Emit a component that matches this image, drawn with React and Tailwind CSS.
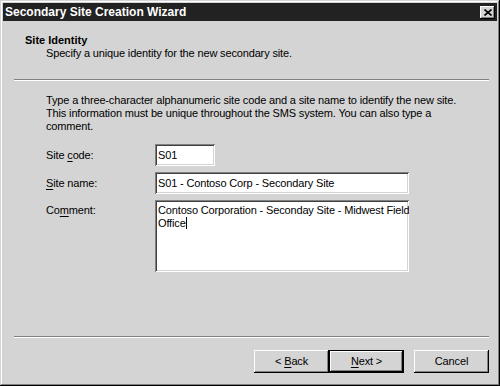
import React from "react";

const raised =
  "shadow-[inset_-1px_-1px_0_#000,inset_1px_1px_0_#fff,inset_-2px_-2px_0_#808080,inset_2px_2px_0_#d4d4d4]";
const sunken =
  "shadow-[inset_1px_1px_0_#808080,inset_-1px_-1px_0_#fff,inset_2px_2px_0_#404040,inset_-2px_-2px_0_#d4d4d4]";

function Sep() {
  return <div className="ml-[11px] mr-[8px] h-[2px] border-t border-t-[#808080] border-b border-b-white" />;
}

function Label({ pre, u, post, top }) {
  return (
    <div className={`w-[109px] shrink-0 ${top ? "pt-[4px] self-start" : ""}`}>
      {pre}
      <span className="underline underline-offset-2">{u}</span>
      {post}
    </div>
  );
}

export default function App() {
  return (
    <div
      className="w-[500px] h-[386px] bg-[#d4d4d4] p-[3px] flex flex-col text-[11px] leading-[13px] text-black tracking-[-0.15px] shadow-[inset_-1px_-1px_0_#000,inset_1px_1px_0_#d4d4d4,inset_-2px_-2px_0_#808080,inset_2px_2px_0_#fff]"
      style={{ fontFamily: '"Liberation Sans", Arial, sans-serif' }}
    >
      {/* title bar */}
      <div className="h-[18px] bg-[#222] flex items-center justify-between pl-[2px] pr-[2px] shrink-0">
        <span className="text-white font-bold text-[12px] tracking-[0px]">Secondary Site Creation Wizard</span>
        <div className={`w-[15px] h-[13px] bg-[#d4d4d4] flex items-center justify-center ${raised}`}>
          <svg width="8" height="7" viewBox="0 0 8 7">
            <path d="M0.5 0.5 L7.5 6.5 M7.5 0.5 L0.5 6.5" stroke="#000" strokeWidth="1.6" />
          </svg>
        </div>
      </div>

      {/* header */}
      <div className="h-[58px] shrink-0 pt-[13px] pl-[22px]">
        <div className="font-bold tracking-[0px]">Site Identity</div>
        <div className="pl-[21px]">Specify a unique identity for the new secondary site.</div>
      </div>
      <Sep />

      {/* body */}
      <div className="pl-[43px] mt-[13px]">
        <p className="whitespace-nowrap">
          Type a three-character alphanumeric site code and a site name to identify the new site.
          <br />
          This information must be unique throughout the SMS system. You can also type a
          <br />
          comment.
        </p>
        <div className="flex items-center mt-[11px]">
          <Label pre="Site " u="c" post="ode:" />
          <div className={`w-[60px] h-[22px] bg-white pl-[3px] flex items-center ${sunken}`}>S01</div>
        </div>
        <div className="flex items-center mt-[6px]">
          <Label pre="" u="S" post="ite name:" />
          <div className={`w-[254px] h-[22px] bg-white pl-[3px] flex items-center ${sunken}`}>
            S01 - Contoso Corp - Secondary Site
          </div>
        </div>
        <div className="flex mt-[6px]">
          <Label pre="Co" u="m" post="ment:" top />
          <div className={`w-[254px] h-[72px] bg-white pl-[3px] pt-[4px] pr-[2px] whitespace-nowrap overflow-hidden ${sunken}`}>
            Contoso Corporation - Seconday Site - Midwest Field
            <br />
            Office
            <span className="inline-block w-[1px] h-[12px] bg-black align-[-2px]" />
          </div>
        </div>
      </div>

      <div className="flex-1" />
      <Sep />
      <div className="flex justify-end pr-[8px] mt-[12px] mb-[10px]">
        <div className={`w-[75px] h-[23px] flex items-center justify-center ${raised}`}>
          &lt; <span className="underline underline-offset-2 ml-[3px]">B</span>ack
        </div>
        <div className="w-[75px] h-[23px] border border-black">
          <div className={`w-full h-full flex items-center justify-center ${raised}`}>
            <span className="underline underline-offset-2">N</span>ext &gt;
          </div>
        </div>
        <div className={`ml-[10px] w-[75px] h-[23px] flex items-center justify-center ${raised}`}>Cancel</div>
      </div>
    </div>
  );
}
